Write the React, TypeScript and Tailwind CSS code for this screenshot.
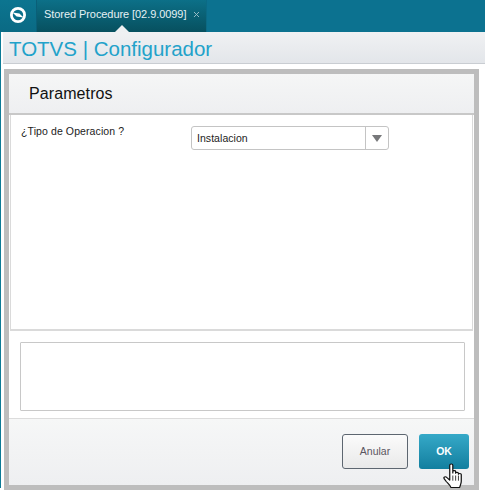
import { X } from 'lucide-react';

const font = "font-['Liberation_Sans',Arial,sans-serif]";

function TotvsLogo() {
  return (
    <svg width="18" height="18" viewBox="0 0 18 18" fill="none" className="-mt-[3px]">
      <circle cx="9" cy="9" r="6.6" stroke="#fff" strokeWidth="2.8" />
      <path d="M3.5 6.4 L10.4 7.6 L14.5 11.6 L7.6 10.4 Z" fill="#fff" />
    </svg>
  );
}

function HandCursor() {
  return (
    <svg
      width="19"
      height="25"
      viewBox="0 0 15.5 24"
      preserveAspectRatio="none"
      className="absolute left-[443px] top-[463px]"
    >
      <path
        d="M5.5 2.2 C5.5 0.6 8 0.6 8 2.2 L8 9.5 L8 8.2 C8 7 10.3 7 10.3 8.2 L10.3 9.8 C10.3 8.7 12.6 8.7 12.6 9.9 L12.6 10.8 C12.6 9.8 14.9 9.9 14.9 11.1 L14.9 17.5 C14.9 20 14 21 13.6 23.5 L6.4 23.5 C5.8 21 4.4 20 2.8 18 L0.9 15 C0.2 13.6 2 12.6 3 13.8 L5.5 16.4 Z"
        fill="#fff"
        stroke="#111"
        strokeWidth="1"
        strokeLinejoin="round"
      />
      <path d="M8 12 V17 M10.3 12 V17 M12.6 12 V17" stroke="#111" strokeWidth="0.7" />
    </svg>
  );
}

export default function App() {
  return (
    <div className={`relative w-[485px] h-[498px] flex flex-col bg-white overflow-hidden ${font}`}>
      {/* Top bar */}
      <div className="h-8 flex bg-[#0c7290]">
        <div className="w-[37px] flex items-center justify-center border-r border-[#0a5f78] bg-gradient-to-b from-[#0c7590] to-[#0a6a84]">
          <TotvsLogo />
        </div>
        <div className="relative w-[170px] flex items-center pl-[7px] pb-1 gap-[6px] border-r border-[#0b6a85] bg-gradient-to-b from-[#0c7088] to-[#07505f]">
          <span className="text-[11px] tracking-[-0.07px] text-[#e6f1f4] whitespace-nowrap">Stored Procedure [02.9.0099]</span>
          <X size={9} strokeWidth={2.5} className="text-[#9fc0cb]" />
          <div className="absolute left-[78px] bottom-0 w-0 h-0 border-x-[7.5px] border-x-transparent border-b-[7px] border-b-[#eef0f2]" />
        </div>
      </div>

      <div className="flex-1 flex min-h-0">
        {/* Left edge strip */}
        <div className="w-[1px] h-[456px] bg-[#0c7a96]" />

        <div className="flex-1 min-w-0 flex flex-col pl-[2px]">
          {/* Title */}
          <div className="h-[32px] bg-gradient-to-b from-[#f0f1f3] to-[#e3e6ea] border-b border-[#c9cdd2] pl-[6px]">
            <h1 className="text-[20.5px] leading-[33px] text-[#22a2ca]">TOTVS | Configurador</h1>
          </div>

          {/* Dialog frame */}
          <div className="mt-[5px] ml-[1px] w-[475px] h-[421px] border-[5px] border-[#bdbdbd] flex flex-col">
            <div className="h-[41px] bg-gradient-to-b from-[#f5f6f6] to-[#eeeff1] border-b-2 border-[#c8c8c8] pl-[20px]">
              <h2 className="text-base leading-[39px] tracking-[0.1px] text-[#111]">Parametros</h2>
            </div>

            <div className="h-[216px] mx-[1px] bg-white border-x border-b-2 border-[#dadada] flex pl-[10px] pt-[9px]">
              <label className="w-[170px] text-[10.5px] leading-[14px] tracking-[0.1px] text-[#222]">¿Tipo de Operacion ?</label>
              <div className="w-[198px] h-6 mt-[2px] flex items-center rounded-[3px] border border-[#c4c4c4] bg-white">
                <span className="flex-1 pl-[5px] pt-[1px] text-[10.5px] tracking-[0.05px] text-[#222]">Instalacion</span>
                <div className="w-[23px] h-full flex items-center justify-center border-l border-[#c4c4c4]">
                  <div className="w-0 h-0 border-x-[5px] border-x-transparent border-t-[7px] border-t-[#77787a]" />
                </div>
              </div>
            </div>

            <div className="h-[88px] bg-white border-b border-[#dcdcdc] px-[11px] pt-[11px]">
              <div className="w-[445px] h-[69px] border border-[#c8c8c8] rounded-[1px] bg-white" />
            </div>

            <div className="flex-1 bg-gradient-to-b from-[#f6f7f7] to-[#eeeff1] flex justify-end items-start gap-[11px] pt-[15px] pr-[5px]">
              <button className="w-[66px] h-[35px] rounded-[3px] border border-[#5d6670] bg-gradient-to-b from-[#fbfbfb] to-[#e9e9e9] text-[10.5px] text-[#5a5560]">
                Anular
              </button>
              <button className="w-[50px] h-[35px] rounded-[3px] bg-gradient-to-b from-[#35a9c8] to-[#117f9f] text-[10.5px] font-bold text-white">
                OK
              </button>
            </div>
          </div>
        </div>
      </div>

      <HandCursor />
    </div>
  );
}
